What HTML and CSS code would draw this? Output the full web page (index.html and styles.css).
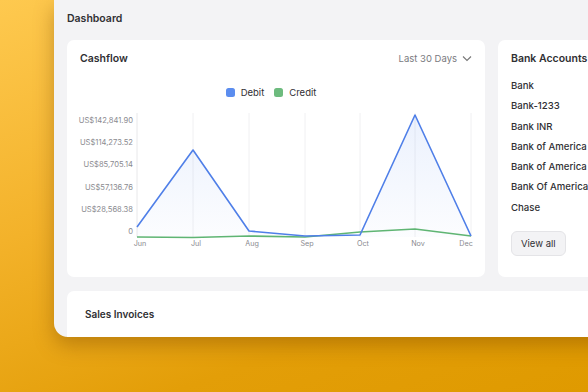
FILE: index.html
```html
<!DOCTYPE HTML>
<html lang="en">
<head>
  <meta name="viewport" content="width=device-width, initial-scale=1">
  <title>Dashboard</title>
  <link rel="stylesheet" href="styles.css">
</head>
<body>
  <div class="window">
    <h2 class="page-title">Dashboard</h2>

    <div class="grid">
      <div class="card cashflow">
        <div class="card-head">
          <h4>Cashflow</h4>
          <span class="range">Last 30 Days
            <svg width="10" height="7" viewBox="0 0 10 7"><path d="M1 1.5 L5 5.5 L9 1.5" fill="none" stroke="#777" stroke-width="1.1"/></svg>
          </span>
        </div>
        <div class="legend">
          <span class="key"><i class="dot debit"></i>Debit</span>
          <span class="key"><i class="dot credit"></i>Credit</span>
        </div>
        <!-- chart drawn in page coordinates -->
        <svg class="chart" width="418" height="150" viewBox="67 105 418 150">
          <defs>
            <linearGradient id="fill" x1="0" y1="0" x2="0" y2="1">
              <stop offset="0" stop-color="#5b8def" stop-opacity="0.12"/>
              <stop offset="1" stop-color="#5b8def" stop-opacity="0.02"/>
            </linearGradient>
          </defs>
          <g stroke="#f0f0f2" stroke-width="1">
            <line x1="193" y1="112" x2="193" y2="236"/>
            <line x1="249" y1="112" x2="249" y2="236"/>
            <line x1="305" y1="112" x2="305" y2="236"/>
            <line x1="360" y1="112" x2="360" y2="236"/>
            <line x1="415" y1="112" x2="415" y2="236"/>
            <line x1="471" y1="112" x2="471" y2="236"/>
          </g>
          <line x1="137" y1="112" x2="137" y2="236" stroke="#e8e8ea"/>
          <g class="ylab" text-anchor="end">
            <text x="133" y="121.5">US$142,841.90</text>
            <text x="133" y="143.5">US$114,273.52</text>
            <text x="133" y="166">US$85,705.14</text>
            <text x="133" y="188.5">US$57,136.76</text>
            <text x="133" y="211">US$28,568.38</text>
            <text x="133" y="233">0</text>
          </g>
          <path d="M137 226 L193 149 L249 230 L305 235 L360 234 L415 114 L471 235 L471 236 L137 236 Z" fill="url(#fill)"/>
          <polyline points="137,236 193,236.5 249,235 305,236 360,231 415,228 471,235" fill="none" stroke="#5fb573" stroke-width="1.6"/>
          <polyline points="137,226 193,149 249,230 305,235 360,234 415,114 471,235" fill="none" stroke="#4f7fe8" stroke-width="1.6" stroke-linejoin="round"/>
          <g class="xlab" text-anchor="middle">
            <text x="140" y="245">Jun</text>
            <text x="196" y="245">Jul</text>
            <text x="252" y="245">Aug</text>
            <text x="307" y="245">Sep</text>
            <text x="363" y="245">Oct</text>
            <text x="418" y="245">Nov</text>
            <text x="466" y="245">Dec</text>
          </g>
        </svg>
      </div>

      <div class="card accounts">
        <h4>Bank Accounts</h4>
        <ul class="bank-list">
          <li>Bank</li>
          <li>Bank-1233</li>
          <li>Bank INR</li>
          <li>Bank of America</li>
          <li>Bank of America</li>
          <li>Bank Of America</li>
          <li>Chase</li>
        </ul>
        <button class="view-all">View all</button>
      </div>

      <div class="card invoices">
        <h4>Sales Invoices</h4>
      </div>
    </div>
  </div>
</body>
</html>
```

FILE: styles.css
```css
/* Global */
:root {
  --text-color: #2f2f33;
  --muted: #8a8a8f;
  --panel-bg: #f3f3f5;
  --card-bg: #ffffff;
}

html, body {
  height: 100%;
}

body {
  margin: 0;
  overflow: hidden;
  font-family: 'Inter', 'Noto Sans', sans-serif;
  color: var(--text-color);
  background: linear-gradient(160deg, #fec94f 0%, #f3b22a 40%, #e39e08 75%, #df9a00 100%);
}

/* App window sitting on the canvas */
.window {
  margin-left: 54px;
  width: 600px;
  height: 337px;
  background-color: var(--panel-bg);
  border-bottom-left-radius: 14px;
  overflow: hidden;
  box-shadow: 0 8px 20px rgba(120, 70, 0, 0.4);
  padding-left: 13px;
  box-sizing: border-box;
}

.page-title {
  margin: 0;
  height: 40px;
  line-height: 38px;
  font-size: 10.5px;
  font-weight: 600;
}

.grid {
  display: grid;
  grid-template-columns: 418px 120px;
  grid-template-rows: 237px 60px;
  gap: 14px 13px;
}

.card {
  background-color: var(--card-bg);
  border-radius: 7px;
  box-sizing: border-box;
}

.card h4 {
  margin: 0;
  font-size: 10.5px;
  font-weight: 600;
}

/* Cashflow */
.cashflow {
  padding: 12px 13px 0;
}

.card-head {
  display: flex;
  justify-content: space-between;
  align-items: center;
}

.range {
  display: flex;
  align-items: center;
  gap: 5px;
  font-size: 9.5px;
  color: #7a7a80;
}

.legend {
  display: flex;
  justify-content: center;
  gap: 10px;
  margin-top: 22px;
  margin-left: -10px;
  font-size: 9.5px;
}

.key {
  display: flex;
  align-items: center;
  gap: 6px;
}

.dot {
  width: 9px;
  height: 9px;
  border-radius: 2.5px;
}

.dot.debit {
  background-color: #5b8def;
}

.dot.credit {
  background-color: #6dbb7e;
}

.chart {
  display: block;
  margin: 8px 0 0 -13px;
}

.ylab text {
  font-size: 7.6px;
  fill: #8a8a8f;
}

.xlab text {
  font-size: 7.2px;
  fill: #8a8a8f;
}

/* Bank accounts */
.accounts {
  grid-column: 2;
  width: 140px;
  padding: 12px 13px;
}

.bank-list {
  list-style: none;
  margin: 11px 0 0;
  padding: 0;
}

.bank-list li {
  font-size: 9.6px;
  font-weight: 500;
  height: 20.3px;
  line-height: 20.3px;
}

.view-all {
  margin-top: 13px;
  font-family: inherit;
  font-size: 9.5px;
  color: var(--text-color);
  background-color: #f3f3f5;
  border: 1px solid #e4e4e7;
  border-radius: 6px;
  padding: 0 9px;
  height: 25px;
}

/* Sales invoices */
.invoices {
  grid-column: 1 / span 2;
  width: 540px;
  padding: 17px 18px;
}

.invoices h4 {
  font-size: 10px;
}
```
